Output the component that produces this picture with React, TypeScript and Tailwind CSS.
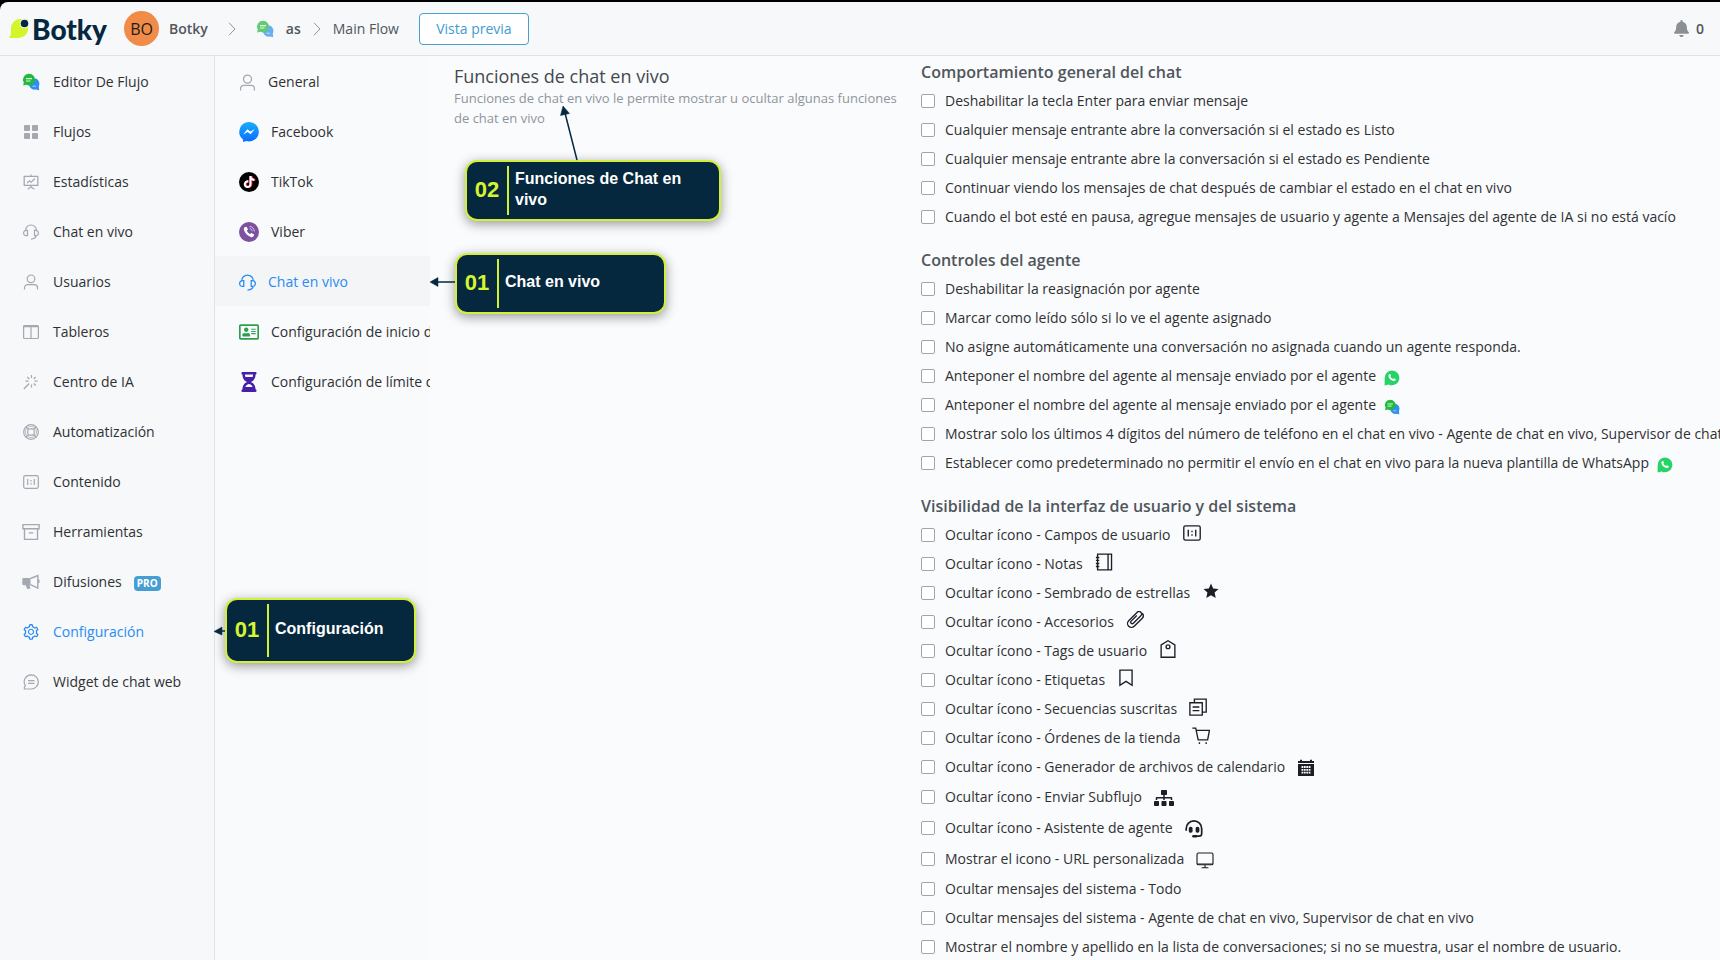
import type { ReactNode } from 'react';
import { AiOutlineFundProjectionScreen, AiOutlineSetting } from 'react-icons/ai';
import { FaBell, FaHourglassHalf, FaRegAddressCard, FaSitemap, FaTiktok } from 'react-icons/fa';

type IconProps = { className?: string; children?: ReactNode };

function Line({ className = 'size-4', children }: IconProps) {
  return (
    <svg
      viewBox="0 0 16 16"
      className={className}
      fill="none"
      stroke="currentColor"
      strokeWidth="1.2"
      aria-hidden="true"
    >
      {children}
    </svg>
  );
}

function ChatBubbles({ className = 'size-[18px]' }: IconProps) {
  return (
    <svg viewBox="0 0 18 18" className={className} aria-hidden="true">
      <path d="M11.5 5.2a5.7 5.7 0 0 1 5.3 8.2l.4 3.8-3.3-.6a5.7 5.7 0 1 1-2.4-11.4z" fill="#2f8ff0" />
      <path d="M7 .8a6 5.8 0 1 1-2.6 11l-3.2.8.6-3A5.8 5.8 0 0 1 7 .8z" fill="#22b93c" />
      <path d="M4 5.6h6M4 8h4.5" stroke="#d9fbd9" strokeWidth="1.1" />
      <path d="M10.5 13.2H14" stroke="#a8d6ff" />
    </svg>
  );
}

function WhatsApp() {
  return (
    <svg viewBox="0 0 16 16" className="size-4" aria-hidden="true">
      <path d="M8 .5A7.4 7.4 0 1 1 4.6 14.5l-4 .9.1-7.4A7.4 7.4 0 0 1 8 .5z" fill="#25d366" />
      <path
        d="M5.2 4.2c.7-.6 1.2-.3 1.5.5l.3.9-.6.9c.5 1.200 1.500 2 2.700 2.500l.8-.8 1.800.8c.3 1.500-1.200 2.200-2.300 2-2.400-.5-4.700-2.600-5-4.900-.1-.8.2-1.500.8-1.900z"
        fill="#fff"
      />
    </svg>
  );
}

function Messenger() {
  return (
    <svg viewBox="0 0 20 20" className="size-5" aria-hidden="true">
      <defs>
        <linearGradient id="messenger" x1="0" y1="0" x2="0" y2="1">
          <stop offset="0" stopColor="#16aefc" />
          <stop offset="1" stopColor="#0a6cff" />
        </linearGradient>
      </defs>
      <path d="M10 0a9.700 9.700 0 1 1-2.600 19L4.200 20l-.3-2.800A9.700 9.700 0 0 1 10 0z" fill="url(#messenger)" />
      <path d="M4.200 12.400 8.400 7.200l3 2.400 4.400-2.700-4.200 5.400-3-2.400z" fill="#fff" />
    </svg>
  );
}

function TikTok() {
  return (
    <span className="flex size-5 items-center justify-center rounded-full bg-black">
      <FaTiktok className="size-3 text-white drop-shadow-[1px_0_0_#fe2c55]" />
    </span>
  );
}

function Viber() {
  return (
    <span className="flex size-5 items-center justify-center rounded-full bg-[#7d51a0]">
      <svg viewBox="0 0 16 16" className="size-4" aria-hidden="true">
        <path
          d="M3.600 3.200 5.400 2.700 7 5.300 5.900 6.700c.6 1.500 1.700 2.600 3.200 3.300l1.300-1.100 2.700 1.600-.4 1.500c-.7 1.100-1.800 1.400-3 .9-3.300-1.300-5.600-3.800-6.800-7-.3-1 0-2 .7-2.700z"
          fill="#fff"
        />
        <path d="M8.500 2.500c2.800.2 4.700 2 4.900 4.900M8.700 4.700c1.500.1 2.400 1 2.500 2.500" fill="none" stroke="#d9c8e8" />
      </svg>
    </span>
  );
}

function Headset({ className }: IconProps) {
  return (
    <Line className={className}>
      <path d="M2.500 6.500a5.500 5.500 0 0 1 11 0M4.500 6.300v5.400H3.300A2.600 2.600 0 0 1 .6 9a2.600 2.600 0 0 1 2.700-2.700zM11.500 6.300v5.400h1.200A2.600 2.600 0 0 0 15.400 9a2.600 2.600 0 0 0-2.700-2.700zM13.300 11.700c-.3 2-1.500 3.300-5.300 3.400" />
    </Line>
  );
}

function User({ className }: IconProps) {
  return (
    <Line className={className}>
      <circle cx="8" cy="4.800" r="3.800" />
      <path d="M1.500 15.500v-1.800a3 3 0 0 1 3-3h7a3 3 0 0 1 3 3v1.800" />
    </Line>
  );
}

function Grid() {
  return (
    <svg viewBox="0 0 16 16" className="size-4" fill="currentColor" aria-hidden="true">
      <rect x="1" y="1" width="6" height="6" rx="1" />
      <rect x="9" y="1" width="6" height="6" rx="1" />
      <rect x="1" y="9" width="6" height="6" rx="1" />
      <rect x="9" y="9" width="6" height="6" rx="1" />
    </svg>
  );
}

function Columns() {
  return (
    <Line>
      <rect x=".6" y="1.500" width="14.800" height="13" rx="1" />
      <path d="M.6 2.600h14.800M8 2v12.500" />
    </Line>
  );
}

function MagicStick() {
  return (
    <Line>
      <path d="M8.500 1v3M8.500 10.500v3M2.500 7.200h3M11.500 7.200h3M4.300 3l2 2M12.700 3l-2 2M10.700 9.500l2 2M6.200 9.500.8 15" />
    </Line>
  );
}

function LifeBuoy() {
  return (
    <Line>
      <circle cx="8" cy="8" r="7.300" />
      <circle cx="8" cy="8" r="5.600" strokeWidth=".7" />
      <rect x="4.800" y="4.800" width="6.400" height="6.400" rx="2" />
      <path d="m2.800 2.800 2.400 2.400M13.200 2.800l-2.400 2.400M2.800 13.200l2.400-2.400M13.200 13.200l-2.400-2.400" />
    </Line>
  );
}

function OneToOne({ className }: IconProps) {
  return (
    <Line className={className}>
      <rect x=".7" y="1.700" width="14.600" height="12.600" rx="1.500" />
      <path d="M4.700 5v6M11.300 5v6M8 6v1.400M8 9v1.400" />
    </Line>
  );
}

function Archive() {
  return (
    <Line className="size-[18px]">
      <path d="M.8 1.500h14.400v3.600H.8zM2.200 5.100v9.400h11.600V5.100M6 8.800h4" />
    </Line>
  );
}

function Megaphone() {
  return (
    <svg viewBox="0 0 18 16" className="h-4 w-[18px]" aria-hidden="true">
      <path
        d="M1.500 4h7v7.200H7.600l.8 3.600H5l-1.200-3.600H1.500A1.300 1.300 0 0 1 .3 10V5.300A1.300 1.300 0 0 1 1.500 4z"
        fill="currentColor"
      />
      <path d="m8.500 4.500 7.300-3v12.600l-7.300-3.500M16.800 5.500v3.500" fill="none" stroke="currentColor" strokeWidth="1.400" />
    </svg>
  );
}

function ChatLines() {
  return (
    <Line>
      <path d="M8.200.8a7.100 7.100 0 1 1 0 14.200H1.400V13l1-1.200A7.100 7.100 0 0 1 8.200.8zM5 6.600h6.500M5 9.400h6.500" />
    </Line>
  );
}

function Notebook() {
  return (
    <Line className="size-[18px]">
      <path d="M2.300 1h12.400v14H2.300zM11.600 1v14M.8 4h3M.8 6.600h3M.8 9.300h3M.8 12h3" />
    </Line>
  );
}

function Star() {
  return (
    <svg viewBox="0 0 18 18" className="size-[18px]" fill="currentColor" aria-hidden="true">
      <path d="m9 1.500 2.200 4.900 5.300.6-3.900 3.600 1.100 5.300L9 13.200l-4.700 2.700 1.100-5.300L1.500 7l5.300-.6z" />
    </svg>
  );
}

function PaperClip() {
  return (
    <Line className="size-[18px]">
      <path d="m9.600 4-5 5a1.300 1.300 0 0 0 1.900 1.900l6.700-6.700a2.200 2.200 0 0 0-3.200-3.100L2.400 8.700a3.400 3.400 0 0 0 4.900 4.900l7.200-7.200a3.400 3.400 0 0 0 0-4.400" />
    </Line>
  );
}

function PriceTag() {
  return (
    <Line className="size-[18px]">
      <path d="M1.900 15.300V4.300L8 .7l6.100 3.600v11z" />
      <circle cx="8" cy="6" r="1.700" />
    </Line>
  );
}

function Bookmark() {
  return (
    <Line className="size-[18px]">
      <path d="M2.600 1h10.800v13.500L8 11l-5.400 3.500z" />
    </Line>
  );
}

function Copies() {
  return (
    <Line className="size-[18px]">
      <path d="M.8 4.200h11v11h-11zM4.800 4.200V1h10.500v11.500h-3.500M3.200 8h6M3.200 11.200h6" />
    </Line>
  );
}

function Cart() {
  return (
    <Line className="size-[18px]">
      <path d="M.3 1h3l2.200 10.500h8.400L15.500 3H3.800" />
      <path d="M6 14.300h1.200M12 14.300h1.200" strokeWidth="1.500" />
    </Line>
  );
}

function Calendar() {
  return (
    <svg viewBox="0 0 18 18" className="size-[18px]" aria-hidden="true">
      <path d="M1 2h2V.8h2V2h8V.8h2V2h2v2H1zM1 5h16v12H1z" fill="currentColor" />
      <path
        d="M4.500 8h9M4.500 10.800h9M4.500 13.600h9"
        stroke="#fafbfd"
        strokeWidth="1.800"
        strokeDasharray="1.800 .6"
      />
    </svg>
  );
}

function Assistant() {
  return (
    <svg viewBox="0 0 18 18" className="size-[18px]" fill="none" stroke="currentColor" aria-hidden="true">
      <path d="M1.200 10.800V8.700a7.700 7.700 0 0 1 15.500 0v4.800a2.700 2.700 0 0 1-2.700 2.700H9" strokeWidth="1.700" />
      <rect x="4.500" y="7.500" width="2.400" height="4.500" rx="1" fill="currentColor" strokeWidth="1.400" />
      <rect x="11.300" y="7.500" width="2.400" height="4.500" rx="1" fill="currentColor" strokeWidth="1.400" />
      <path d="M8.500 16.200h2.500" strokeWidth="2.600" strokeLinecap="round" />
    </svg>
  );
}

function Monitor() {
  return (
    <Line className="size-[18px]">
      <rect x=".9" y="1.800" width="14.200" height="10.400" rx="1.200" strokeWidth="1" />
      <path d="M.9 11.500h14.200M5 14.900h6M8 12.500v2.400" strokeWidth="1" />
    </Line>
  );
}

function Chevron() {
  return (
    <svg viewBox="0 0 8 14" className="h-3.5 w-2 text-[#90959b]" fill="none" stroke="currentColor" aria-hidden="true">
      <path d="m1 .8 6 6.200-6 6.200" />
    </svg>
  );
}

const mainNav = [
  { name: 'Editor De Flujo', icon: <ChatBubbles /> },
  { name: 'Flujos', icon: <Grid /> },
  { name: 'Estadísticas', icon: <AiOutlineFundProjectionScreen className="size-[18px]" /> },
  { name: 'Chat en vivo', icon: <Headset /> },
  { name: 'Usuarios', icon: <User /> },
  { name: 'Tableros', icon: <Columns /> },
  { name: 'Centro de IA', icon: <MagicStick /> },
  { name: 'Automatización', icon: <LifeBuoy /> },
  { name: 'Contenido', icon: <OneToOne /> },
  { name: 'Herramientas', icon: <Archive /> },
  { name: 'Difusiones', icon: <Megaphone />, badge: 'PRO' },
  { name: 'Configuración', icon: <AiOutlineSetting className="size-[18px]" />, active: true },
  { name: 'Widget de chat web', icon: <ChatLines /> },
];

const settingsNav = [
  { name: 'General', icon: <User className="size-[17px]" /> },
  { name: 'Facebook', icon: <Messenger /> },
  { name: 'TikTok', icon: <TikTok /> },
  { name: 'Viber', icon: <Viber /> },
  { name: 'Chat en vivo', icon: <Headset className="size-[17px]" />, active: true },
  { name: 'Configuración de inicio de sesión', icon: <FaRegAddressCard className="size-5 text-[#2f9e4f]" /> },
  { name: 'Configuración de límite de tiempo', icon: <FaHourglassHalf className="size-5 text-[#4520a8]" /> },
];

type Option = { label: string; icon?: ReactNode; place?: 'up' | 'near' | 'level' | 'tall' };

const sections: { title: string; options: Option[] }[] = [
  {
    title: 'Comportamiento general del chat',
    options: [
      { label: 'Deshabilitar la tecla Enter para enviar mensaje' },
      { label: 'Cualquier mensaje entrante abre la conversación si el estado es Listo' },
      { label: 'Cualquier mensaje entrante abre la conversación si el estado es Pendiente' },
      { label: 'Continuar viendo los mensajes de chat después de cambiar el estado en el chat en vivo' },
      {
        label:
          'Cuando el bot esté en pausa, agregue mensajes de usuario y agente a Mensajes del agente de IA si no está vacío',
      },
    ],
  },
  {
    title: 'Controles del agente',
    options: [
      { label: 'Deshabilitar la reasignación por agente' },
      { label: 'Marcar como leído sólo si lo ve el agente asignado' },
      { label: 'No asigne automáticamente una conversación no asignada cuando un agente responda.' },
      { label: 'Anteponer el nombre del agente al mensaje enviado por el agente', icon: <WhatsApp />, place: 'near' },
      {
        label: 'Anteponer el nombre del agente al mensaje enviado por el agente',
        icon: <ChatBubbles className="size-4" />,
        place: 'near',
      },
      {
        label:
          'Mostrar solo los últimos 4 dígitos del número de teléfono en el chat en vivo - Agente de chat en vivo, Supervisor de chat en vivo',
      },
      {
        label:
          'Establecer como predeterminado no permitir el envío en el chat en vivo para la nueva plantilla de WhatsApp',
        icon: <WhatsApp />,
        place: 'near',
      },
    ],
  },
  {
    title: 'Visibilidad de la interfaz de usuario y del sistema',
    options: [
      { label: 'Ocultar ícono - Campos de usuario', icon: <OneToOne className="size-[18px]" />, place: 'up' },
      { label: 'Ocultar ícono - Notas', icon: <Notebook />, place: 'up' },
      { label: 'Ocultar ícono - Sembrado de estrellas', icon: <Star />, place: 'up' },
      { label: 'Ocultar ícono - Accesorios', icon: <PaperClip />, place: 'up' },
      { label: 'Ocultar ícono - Tags de usuario', icon: <PriceTag />, place: 'up' },
      { label: 'Ocultar ícono - Etiquetas', icon: <Bookmark />, place: 'up' },
      { label: 'Ocultar ícono - Secuencias suscritas', icon: <Copies />, place: 'up' },
      { label: 'Ocultar ícono - Órdenes de la tienda', icon: <Cart />, place: 'up' },
      { label: 'Ocultar ícono - Generador de archivos de calendario', icon: <Calendar />, place: 'level' },
      { label: 'Ocultar ícono - Enviar Subflujo', icon: <FaSitemap className="size-5" />, place: 'tall' },
      { label: 'Ocultar ícono - Asistente de agente', icon: <Assistant />, place: 'tall' },
      { label: 'Mostrar el icono - URL personalizada', icon: <Monitor />, place: 'tall' },
      { label: 'Ocultar mensajes del sistema - Todo' },
      { label: 'Ocultar mensajes del sistema - Agente de chat en vivo, Supervisor de chat en vivo' },
      { label: 'Mostrar el nombre y apellido en la lista de conversaciones; si no se muestra, usar el nombre de usuario.' },
    ],
  },
];

const iconPlace = {
  up: 'pl-3 pb-1',
  near: 'pl-2 pt-1',
  level: 'pl-3 pt-0.5',
  tall: 'pl-3 pt-0.5',
};

function OptionRow({ option, id }: { option: Option; id: string }) {
  return (
    <li className={option.place === 'tall' ? 'flex h-[31px] items-center' : 'flex h-[29px] items-center'}>
      <input
        id={id}
        type="checkbox"
        className="size-3.5 shrink-0 appearance-none rounded-xs border border-[#a0a5ad] bg-white checked:bg-[#409eff]"
      />
      <label htmlFor={id} className="flex items-center whitespace-nowrap pl-2.5 text-sm text-[#303133]">
        {option.label}
        {option.icon && (
          <span className={`text-[#1b1e26] ${iconPlace[option.place ?? 'up']}`}>{option.icon}</span>
        )}
      </label>
    </li>
  );
}

function Callout({ step, text, className }: { step: string; text: string; className: string }) {
  return (
    <div
      className={`absolute flex rounded-xl border-2 border-[#d3ef3a] bg-[#05283e] py-1 font-['Liberation_Sans',sans-serif] font-bold shadow-[0_3px_12px_rgba(0,0,0,0.4)] ${className}`}
    >
      <span className="flex w-[42px] shrink-0 items-center justify-center border-r-2 border-[#d3ef3a] pb-0.5 text-[22px] text-[#d6f531]">
        {step}
      </span>
      <span className="flex items-center pr-5 pb-1 pl-1.5 text-base leading-[21px] text-white">{text}</span>
    </div>
  );
}

function Header() {
  return (
    <header className="flex h-[54px] shrink-0 items-center rounded-tl-lg border-b border-[#dfe2e6] bg-[#f6f8fa] pl-2 text-sm text-[#50565c]">
      <a href="#" className="flex items-center" aria-label="Botky">
        <svg viewBox="0 0 24 24" className="size-6" aria-hidden="true">
          <path d="M12 2h8v9a9.500 9.500 0 0 1-10 10H1l2-4V11a9 9 0 0 1 9-9z" fill="#d6f528" />
          <circle cx="16.500" cy="6.500" r="4.800" fill="#f6f8fa" />
          <circle cx="16.500" cy="6.500" r="3.800" fill="#05283e" />
        </svg>
        <span className="font-['Lato',sans-serif] text-[28px] leading-8 font-black text-[#05283e]">Botky</span>
      </a>
      <span className="ml-[17px] flex size-[35px] items-center justify-center rounded-full bg-[#f08c48] text-base text-[#1c1c1c]">
        BO
      </span>
      <nav className="flex items-center" aria-label="Ruta">
        <a href="#" className="pl-2.5 font-semibold">Botky</a>
        <span className="px-5">
          <Chevron />
        </span>
        <span className="opacity-70">
          <ChatBubbles />
        </span>
        <a href="#" className="px-3 font-semibold">as</a>
        <Chevron />
        <a href="#" className="pl-3">Main Flow</a>
      </nav>
      <button
        type="button"
        className="ml-5 h-8 w-[110px] rounded-sm border border-[#4a9fd0] bg-white text-sm text-[#3f9bd2]"
      >
        Vista previa
      </button>
      <button type="button" className="mr-4 ml-auto flex items-center gap-1.5 font-semibold" aria-label="Notificaciones">
        <FaBell className="size-[17px] text-[#8b9094]" />
        0
      </button>
    </header>
  );
}

export default function App() {
  return (
    <div className="relative flex h-screen flex-col overflow-hidden bg-black pt-0.5 font-['Open_Sans','Noto_Sans',sans-serif]">
      <Header />
      <div className="flex min-h-0 flex-1 bg-[#fafbfd]">
        <nav className="w-[215px] shrink-0 border-r border-[#e0e3e7] bg-[#f6f8fa]" aria-label="Principal">
          {mainNav.map((item) => (
            <a
              key={item.name}
              href="#"
              className={`flex h-[50px] items-center gap-3 pt-0.5 pl-[21px] text-sm ${item.active ? 'text-[#2a8bf2]' : 'text-[#303133]'}`}
            >
              <span className={`flex w-5 justify-center ${item.active ? '' : 'text-[#a3a8b1]'}`}>{item.icon}</span>
              {item.name}
              {item.badge && (
                <span className="mt-0.5 h-[15px] rounded-sm bg-[#459fd3] px-[3px] text-[10px] leading-[15px] font-bold text-white">
                  {item.badge}
                </span>
              )}
            </a>
          ))}
        </nav>

        <nav className="w-[215px] shrink-0 overflow-hidden bg-[#f9fafc]" aria-label="Configuración">
          {settingsNav.map((item) => (
            <a
              key={item.name}
              href="#"
              className={`flex h-[50px] items-center gap-3 overflow-hidden pt-0.5 pl-6 text-sm whitespace-nowrap ${
                item.active ? 'bg-[#f4f5f6] text-[#2a8bf2]' : 'text-[#303133]'
              }`}
            >
              <span className={`shrink-0 ${item.active ? '' : 'text-[#a3a8b1]'}`}>{item.icon}</span>
              {item.name}
            </a>
          ))}
        </nav>

        <main className="flex min-w-0 flex-1 overflow-hidden pl-6">
          <div className="w-[467px] shrink-0 pt-2">
            <h1 className="text-lg leading-6 font-medium text-[#43494f]">Funciones de chat en vivo</h1>
            <p className="pr-4 text-[13px] leading-5 text-[#8f959c]">
              Funciones de chat en vivo le permite mostrar u ocultar algunas funciones de chat en vivo
            </p>
          </div>
          <form className="flex-1">
            {sections.map((section, s) => (
              <fieldset key={section.title} className="pb-[13px]">
                <legend className="h-[30px] text-base leading-8 font-semibold text-[#50565c]">{section.title}</legend>
                <ul>
                  {section.options.map((option, i) => (
                    <OptionRow key={i} option={option} id={`option-${s}-${i}`} />
                  ))}
                </ul>
              </fieldset>
            ))}
          </form>
        </main>
      </div>

      <Callout step="02" text="Funciones de Chat en vivo" className="top-[160px] left-[465px] h-[61px] w-[256px]" />
      <Callout step="01" text="Chat en vivo" className="top-[253px] left-[455px] h-[61px] w-[211px]" />
      <Callout step="01" text="Configuración" className="top-[598px] left-[225px] h-[65px] w-[191px]" />
      <svg
        className="pointer-events-none absolute top-0 left-0 h-[700px] w-[700px]"
        viewBox="0 0 700 700"
        fill="#05283e"
        stroke="#05283e"
        aria-hidden="true"
      >
        <path d="M577 160 565 113M455 282h-20M225 631h-6" fill="none" strokeWidth="1.500" />
        <path d="m563 106 6.500 7.500-9 2zM430 282l8-4.500v9zM214 631.500l8-4.500v8z" strokeWidth=".5" />
      </svg>
    </div>
  );
}
